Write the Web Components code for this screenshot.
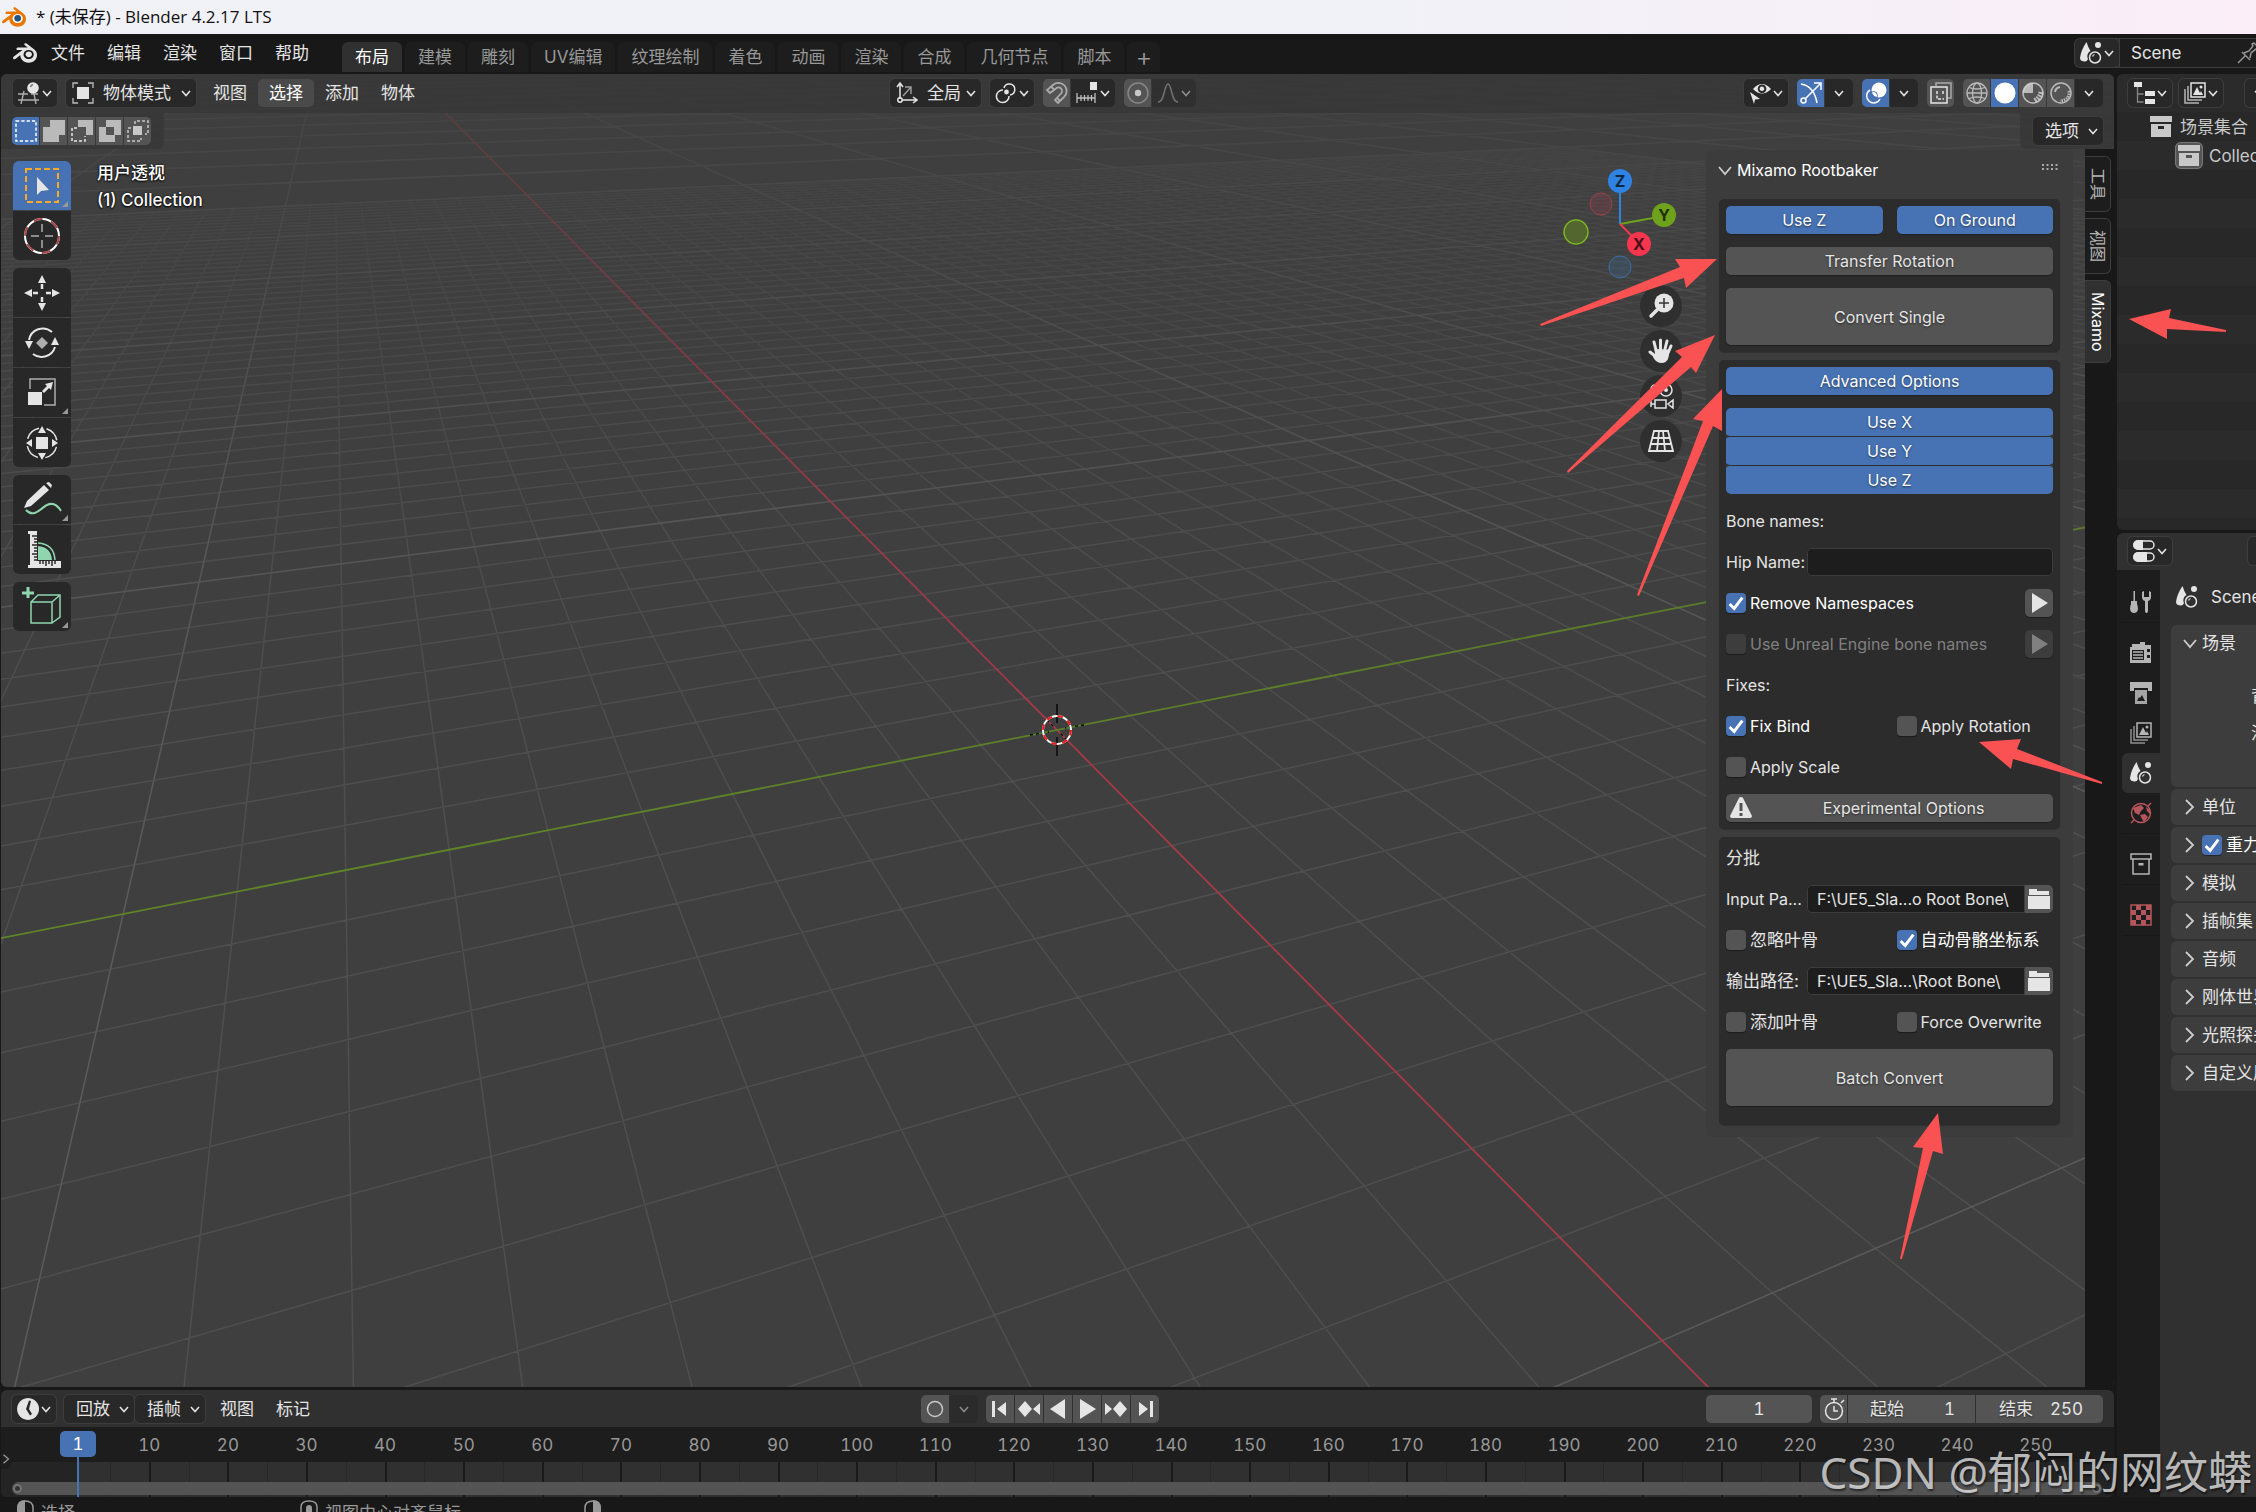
<!DOCTYPE html>
<html lang="zh-CN">
<head>
<meta charset="utf-8">
<title>* (未保存) - Blender 4.2.17 LTS</title>
<style>
  body {
    margin: 0;
    height: 100vh;
    overflow: hidden;
    background: #181818;
    color: #e5e5e5;
    font: 17px/28px Inter, "Noto Sans CJK SC", sans-serif;
  }
</style>
</head>
<body>
<bl-app></bl-app>

<script>
(function () {
  const BASE = `
    * { box-sizing: border-box; }
    :host(:lang(en)) { font-size: 16px; }
    button, input, select {
      font: inherit;
      color: inherit;
      margin: 0;
      padding: 0;
      border: 0;
      background: none;
      appearance: none;
    }
    button { display: flex; align-items: center; justify-content: center; white-space: nowrap; }
  `;

  function define(name, html, setup) {
    const template = document.createElement("template");
    template.innerHTML = `<style>${BASE}</style>${html}`;

    customElements.define(name, class extends HTMLElement {
      constructor() {
        super();
        this.attachShadow({ mode: "open" });
        this.shadowRoot.append(template.content.cloneNode(true));
      }

      connectedCallback() {
        if (setup) {
          setup(this, this.shadowRoot);
        }
      }
    });
  }

  const LOGO = "M12.51 13.214c.046-.8.438-1.506 1.03-2.006a3.424 3.424 0 0 1 2.212-.79c.85 0 1.631.3 2.211.79.592.5.983 1.206 1.028 2.005.045.823-.285 1.586-.865 2.153a3.389 3.389 0 0 1-2.374.938 3.393 3.393 0 0 1-2.376-.938c-.58-.567-.91-1.33-.865-2.152M7.35 14.831c.006.314.106.922.256 1.398a7.372 7.372 0 0 0 1.593 2.757 8.227 8.227 0 0 0 2.787 2.001 8.947 8.947 0 0 0 3.66.76 8.964 8.964 0 0 0 3.657-.772 8.285 8.285 0 0 0 2.785-2.01 7.428 7.428 0 0 0 1.592-2.762 6.964 6.964 0 0 0 .25-3.074 7.123 7.123 0 0 0-1.016-2.779 7.764 7.764 0 0 0-1.852-2.043h.002L13.566 2.55l-.02-.015c-.492-.378-1.319-.376-1.86.002-.547.382-.609 1.015-.123 1.415l-.001.001 3.126 2.543-9.53.01h-.013c-.788.001-1.545.518-1.695 1.172-.154.665.38 1.217 1.2 1.22V8.9l4.83-.01-8.62 6.617-.034.025c-.813.622-1.075 1.658-.563 2.315.52.667 1.625.668 2.447.004L7.414 14s-.069.52-.063.831zm12.09 1.741c-.97.988-2.326 1.548-3.795 1.55-1.47.004-2.827-.552-3.797-1.538a4.51 4.51 0 0 1-1.036-1.622 4.282 4.282 0 0 1 .282-3.519 4.702 4.702 0 0 1 1.153-1.371c.942-.768 2.141-1.183 3.396-1.185 1.256-.002 2.455.41 3.398 1.175.48.391.87.854 1.152 1.367a4.28 4.28 0 0 1 .522 1.706 4.236 4.236 0 0 1-.239 1.811 4.54 4.54 0 0 1-1.035 1.626";

  // Default grid is 22 units; fill is off, strokes are 1.5 unless a shape says otherwise.
  const F = 'fill="currentColor" stroke="none"';
  const G = 'fill="none" stroke="#8fd6ae"';
  const ICONS = {
    logo: { box: 24, svg: `<path ${F} d="${LOGO}"/>` },
    logocolor: { box: 24, svg: `<circle cx="15.7" cy="13.3" r="6" fill="#fff" stroke="none"/><path fill="#ea7600" stroke="none" d="${LOGO}"/><circle cx="15.7" cy="13.3" r="3.3" fill="#1f5387" stroke="none"/>` },
    chevron: { box: 12, svg: `<path d="M2 4l4 4.500l4-4.500"/>` },
    unfolded: { box: 20, svg: `<path stroke-width="1.800" opacity=".85" d="M4 7l6 7l6-7"/>` },
    folded: { box: 20, svg: `<path stroke-width="1.800" opacity=".85" d="M6 3l7 7l-7 7"/>` },
    right: { box: 12, svg: `<path d="M3 1l6 5l-6 5"/>` },
    view3d: { svg: `<g opacity=".7"><path d="M0 12h10M0 18h21M6 9L3 22M16 12l2 10M13 12h7" stroke-width="1.400"/></g><circle cx="15" cy="6" r="5.800" ${F}/><path d="M12.500 5q.5-2 2.500-2.500" stroke="#777"/>` },
    object: { svg: `<path d="M1 6V1h5M16 1h5v5M21 16v5h-5M6 21H1v-5" stroke-width="1.300" opacity=".8"/><rect x="5" y="5" width="12" height="12" ${F}/>` },
    axes: { svg: `<path d="M4 17V2M1 5l3-4l3 4M6 18h14M17 15l4 3l-4 3"/><circle cx="4" cy="18" r="2.200"/><g opacity=".6"><path d="M7 14l8-9M9 5h6v7"/></g>` },
    pivot: { svg: `<path d="M8 8a6.300 6.300 0 1 0 6 6"/><path d="M9 6a5.500 5.500 0 1 1 6 7"/><circle cx="11.500" cy="10" r="2.400" ${F}/>` },
    magnet: { svg: `<path stroke-width="1.800" d="M4 11L1 8L7 3a8 8 0 0 1 11 12L12 21L9 18l6-6.500a3.500 3.500 0 0 0-5-5zM5 4.500l3 3M11 16l3 3" opacity=".6"/>` },
    snapinc: { svg: `<path d="M1 11v10M19 11v10M1 16h18M5 13v6M8.500 13v6M12 13v6M15.500 13v6" stroke-width="1.300" opacity=".8"/><rect x="14" y="0" width="7" height="8" ${F}/>` },
    prop: { svg: `<circle cx="11" cy="11" r="10" opacity=".35"/><circle cx="11" cy="11" r="3.200" ${F} opacity=".8"/>` },
    falloff: { svg: `<path d="M1 20C8 20 7 2 11 2s3 18 10 18" opacity=".7"/>` },
    eye: { svg: `<path fill-rule="evenodd" ${F} d="M4 7Q13-3 22 7Q13 16 4 7zM13 2.500a4.300 4.300 0 1 0 .1 0zM13 4.500a2.300 2.300 0 1 1-.1 0z"/><path ${F} d="M1 10l10 7l-5 .5L5 22z"/>` },
    gizmo: { svg: `<path d="M1 2Q14 4 17 21M5 17L20 2M14 1h7v7"/><circle cx="3.500" cy="18.500" r="2.500"/>` },
    overlay: { svg: `<circle cx="14" cy="8" r="7.500" ${F}/><path d="M5 8a7 7 0 1 0 10 9"/><circle cx="8.500" cy="13.500" r="4" stroke="#4772b3" stroke-width="1"/>` },
    xray: { svg: `<path d="M6 4V1h15v15h-3" opacity=".6"/><rect x="1" y="5" width="16" height="16"/><path d="M7 9v8h7M13 9v4" stroke-dasharray="3 1.500"/>` },
    wire: { svg: `<g opacity=".7" stroke-width="1.300"><circle cx="11" cy="11" r="10"/><ellipse cx="11" cy="11" rx="4.500" ry="10"/><path d="M1 11h20M3 5.500q8 3 16 0M3 16.500q8-3 16 0"/></g>` },
    solid: { svg: `<circle cx="11" cy="11" r="10.500" ${F}/>` },
    matprev: { svg: `<circle cx="11" cy="11" r="10" opacity=".7"/><path ${F} opacity=".7" d="M11 1v10H1A10 10 0 0 1 11 1z"/><path opacity=".7" stroke-width="5" stroke-dasharray="2 1" d="M19 10Q18 16 12 19"/>` },
    rendered: { svg: `<g opacity=".7"><circle cx="11" cy="11" r="10"/><path d="M5 10a6 6 0 0 1 5-5" stroke-width="2"/><path d="M19 9Q20 18 10 19" stroke-width="3" stroke-dasharray="1.500 1"/></g>` },
    scene: { svg: `<path ${F} d="M6.500 0Q8 5 10.500 9A6.500 6.500 0 0 0 8 17Q7 20 4 19.500Q0 19 0 16Q1 8 6.500 0z"/><circle cx="18" cy="3" r="3" ${F}/><circle cx="15" cy="15.500" r="5.500"/><path d="M12.500 14.500q.5-1.500 2-2" stroke-width="1.200"/>` },
    pin: { svg: `<path d="M1 21l7-7M5 10l8 8M7 11l5-2l4-5l-1-2l2-1l5 5l-1 2l-2-1l-5 4l-1 5" opacity=".6"/>` },
    outliner: { svg: `<rect x="1" y="0" width="8" height="5" ${F}/><rect x="12" y="9" width="10" height="5" ${F}/><rect x="12" y="17" width="10" height="5" ${F}/><path d="M4.500 5v15h6M4.500 12h6" opacity=".5" stroke-width="1.300"/>` },
    viewlayer: { svg: `<g opacity=".75"><path d="M1 7v14h14M4 4v14h14"/></g><rect x="7" y="1" width="14" height="14"/><path ${F} d="M9 13l4-8l4 8zM15 13l2-4l2 4z"/><circle cx="17" cy="5" r="1.500" ${F}/>` },
    collection: { svg: `<path fill-rule="evenodd" ${F} d="M0 0h22v6H0zM1 8h20v13H1zM8 10v3h6v-3z"/>` },
    collectionline: { svg: `<path d="M1 1h20v5H1zM3 6v15h16V6"/><rect x="8.500" y="10" width="5" height="2.500" ${F}/>` },
    props: { svg: `<rect x="1" y="1" width="20" height="8" rx="4"/><rect x="1" y="13" width="20" height="8" rx="4"/><path ${F} d="M5 0h5v10H5a5 5 0 0 1 0-10zM5 12h9v10H5a5 5 0 0 1 0-10z"/>` },
    tools: { svg: `<path ${F} d="M3.500 0h1.500v11H3.500zM1 10h6v3q1 2 1 5q-.5 4-4 4t-4-4q0-3 1-5zM12 1v5q0 3 3 4v10q0 2 1.500 2t1.500-2V10q3-1 3-4V1l-2-1v6h-5V0z"/>` },
    render: { svg: `<path fill-rule="evenodd" ${F} d="M2 2h8V0h5v3h6v18H0V5h2zM2 8v10h12V8zM17 7v3h3V7zM17 13v3h3v-3z"/><path d="M3 10h10M3 13h10M3 16h10"/>` },
    output: { svg: `<path ${F} d="M0 0h22v9h-4V6H4v3H0z"/><path fill-rule="evenodd" ${F} opacity=".9" d="M5 8h12v14H5zM7 19h8l-3-6-2 3-1-1z"/>` },
    world: { svg: `<circle cx="11" cy="11" r="9.500"/><path ${F} d="M3 6l8-3l3 3l-3 3l-2 4l-4-2zM10 13l5-1l3 3l-4 5l-2-3zM16 5l4 3v4l-3-3z"/><path d="M1 21l3-3M18 4l3-3"/>` },
    texture: { svg: `<rect x="1" y="1" width="20" height="20"/><path ${F} d="M6 1h5v5H6zM16 1h5v5h-5zM1 6h5v5H1zM11 6h5v5h-5zM6 11h5v5H6zM16 11h5v5h-5zM1 16h5v5H1zM11 16h5v5h-5z"/>` },
    clock: { svg: `<path fill-rule="evenodd" ${F} d="M11 0a11 11 0 1 0 .1 0zM14 3l-2 8l3 5l-2 1.500l-4-6.500l3-8.500z"/>` },
    stopwatch: { svg: `<circle cx="11" cy="13" r="8.500"/><path d="M8 1h6M11 1v4M18 5l3-3M11 8v5h4"/>` },
    record: { svg: `<circle cx="11" cy="11" r="7.500" opacity=".8"/>` },
    first: { svg: `<path ${F} d="M3 3h3v16H3zM17 4v14L8 11z"/>` },
    prevkey: { svg: `<path ${F} d="M7 3l7 8l-7 8l-7-8zM22 5v12l-7-6z"/>` },
    playback: { svg: `<path ${F} d="M18 1v20L3 11z"/>` },
    play: { svg: `<path ${F} d="M4 1v20L20 11z"/>` },
    nextkey: { svg: `<path ${F} d="M15 3l7 8l-7 8l-7-8zM0 5v12l7-6z"/>` },
    last: { svg: `<path ${F} d="M16 3h3v16h-3zM5 4v14L14 11z"/>` },
    folder: { svg: `<path ${F} d="M1 1h8v2h12v4H1zM0 8h22v13H0z"/>` },
    warn: { svg: `<path fill-rule="evenodd" ${F} d="M11 0q1.500 0 2 1l9 18q0 2-2 2H2q-2 0-2-2L9 1q.5-1 2-1zM9.500 6v8h3V6zM9.500 16v3h3v-3z"/>` },
    selset: { svg: `<rect x="1" y="1" width="20" height="20" stroke-dasharray="3.300 2" stroke-width="1.500"/>` },
    selext: { svg: `<path ${F} d="M7 0h15v15h-6v7H0V7h7z" opacity=".7"/>` },
    selsub: { svg: `<path ${F} d="M7 0h15v15h-7V7H7z" opacity=".7"/><path d="M6 8H1v13h13v-5" stroke-dasharray="3 2"/>` },
    seldif: { svg: `<path fill-rule="evenodd" ${F} opacity=".7" d="M7 0h15v15h-6v7H0V7h7zM7 7v8h8V7z"/>` },
    selint: { svg: `<rect x="6" y="6" width="9" height="9" ${F} opacity=".8"/><path d="M8 4V1h13v13h-3M4 8H1v13h13v-3" stroke-dasharray="3 2" opacity=".8"/>` },
    mouseL: { svg: `<path d="M11 1q8 0 8 7v14"/><path ${F} d="M11 0v22H3V8q0-8 8-8z"/>` },
    mouseM: { svg: `<path d="M3 22V7q0-6 8-6t8 6v15"/><rect x="8" y="5" width="6" height="17" rx="3" ${F}/>` },
    mouseR: { svg: `<path d="M3 22V8q0-7 8-7"/><path ${F} d="M11 0q8 0 8 8v14h-8z"/>` },
    tselect: { box: 40, svg: `<rect x="4" y="3" width="32" height="33" fill="none" stroke="#ffa928" stroke-width="2" stroke-dasharray="6 3"/><path ${F} d="M15 11v18l4-4l8-1z"/>` },
    tcursor: { box: 40, svg: `<circle cx="20" cy="20" r="17" stroke="#fff" stroke-width="2"/><circle cx="20" cy="20" r="17" stroke="#a84448" stroke-width="2" stroke-dasharray="9 8.800"/><path d="M20 8v8M20 24v8M9 20h8M23 20h8" opacity=".7"/>` },
    tmove: { box: 40, svg: `<path ${F} d="M20 2l4 8h-8zM20 38l4-8h-8zM2 20l8-4v8zM38 20l-8-4v8z"/><path d="M20 11v5M20 24v5M11 20h5M24 20h5" stroke-width="2.500"/>` },
    trotate: { box: 40, svg: `<path d="M7 17A14 14 0 0 1 30 9M33 24A14 14 0 0 1 11 31" stroke-width="2"/><path ${F} d="M3 18h8l-4 8zM29 22h8l-4-8z"/><path ${F} opacity=".7" d="M20 14l6 6l-6 6l-6-6z"/>` },
    tscale: { box: 40, svg: `<path d="M8 16V6h25v26H22" opacity=".7"/><path ${F} d="M6 19h14v13H6zM31 9l-2 8l-2-2l-5 5l-2-2l5-5l-2-2z"/>` },
    ttransform: { box: 40, svg: `<circle cx="20" cy="20" r="15" stroke-dasharray="16 7.600" stroke-dashoffset="-4"/><path ${F} d="M14 14h12v12H14zM20 3l4 7h-8zM20 37l4-7h-8zM4 20l6-4v8zM36 20l-6-4v8z"/>` },
    tannotate: { box: 40, svg: `<path ${F} d="M2 28l3-7L22 5l5 5L9 26zM24 3l3-1l3 3l-1 3z"/><path d="M4 30C12 39 20 27 25 25Q33 21 39 31" ${G} stroke-width="2"/>` },
    tmeasure: { box: 40, svg: `<path ${F} d="M6 1h9v30h24v7H6v-3h2V4H6z"/><path stroke="#282828" d="M10 6h5M12 9h3M12 12h3M10 15h5M12 18h3M12 21h3M10 24h5M12 27h3M12 30h3M18 31v3M21 31v3M24 31v5M27 31v3M30 31v5M33 31v3"/><path fill="#8fd6ae" stroke="none" d="M16 16q13 1 14 14H16z"/><path ${G} d="M16 13q16 1 17 17"/>` },
    taddcube: { box: 40, svg: `<path ${G} stroke-width="3" d="M6 0v11M0 6h12"/><path ${G} d="M9 15h21v21H9zM9 15l7-7h22v22l-8 6M30 15l8-7"/>` },
    zoom: { box: 26, svg: `<circle cx="16" cy="10" r="9.500" ${F}/><path d="M9 17l-6 6" stroke-width="3.500" stroke-linecap="round"/><path stroke="#333" d="M16 5v10M11 10h10"/>` },
    hand: { box: 26, svg: `<path d="M8 12L6 4M12.500 11V2M17 11l2-8M20 15l3-7M7 18l-5-4" stroke-width="3" stroke-linecap="round"/><path ${F} d="M6.500 11L21 11.500q1 13-7 13.500q-6 0-9-6l2-3z"/>` },
    camera: { box: 26, svg: `<circle cx="7" cy="6" r="4"/><circle cx="18" cy="7" r="6"/><circle cx="18" cy="7" r="2" ${F}/><path d="M7 17h11v8H7zM7 21H3M3 18v6M25 17v8l-5-4z"/>` },
    persp: { box: 26, svg: `<path stroke-width="1.800" d="M6 3h14l5 20H1zM4 10h18M3 16h20M11 3L9 23M15 3l2 20"/>` },
    grip: { box: 16, svg: `<path stroke="#aaa" stroke-width="2" stroke-dasharray="2 2.500" d="M0 5h16M0 9h16"/>` },
    check: { svg: `<path stroke="#fff" stroke-width="3.200" d="M4 12l5 5L18 5"/>` }
  };

  define("bl-icon", `
    <style>
      :host { display: block; flex: none; width: 22px; height: 22px; }
      :host([size="12"]) { width: 12px; height: 12px; }
      :host([size="16"]) { width: 16px; height: 16px; }
      :host([size="20"]) { width: 20px; height: 20px; }
      :host([size="24"]) { width: 24px; height: 24px; }
      :host([size="26"]) { width: 26px; height: 26px; }
      :host([size="40"]) { width: 40px; height: 40px; }
      svg { display: block; width: 100%; height: 100%; fill: none; stroke: currentColor; stroke-width: 1.5; }
    </style>
    <svg aria-hidden="true"></svg>
  `, (host, root) => {
    const icon = ICONS[host.getAttribute("name")];
    if (!icon) {
      return;
    }
    const svg = root.querySelector("svg");
    svg.setAttribute("viewBox", `0 0 ${icon.box || 22} ${icon.box || 22}`);
    svg.innerHTML = icon.svg;
  });

  function makeIcon(name, size) {
    const icon = document.createElement("bl-icon");
    icon.setAttribute("name", name);
    if (size) {
      icon.setAttribute("size", size);
    }
    return icon;
  }

  define("bl-button", `
    <style>
      :host { display: block; flex: 1; min-width: 0; }
      button {
        width: 100%;
        height: 28px;
        gap: 6px;
        padding: 0 4px;
        border-radius: 5px;
        background: #545454;
        text-shadow: 0 1px 2px #0008;
        box-shadow: 0 1px 1px #0004;
      }
      :host([on]) button { background: #4772b3; color: #fff; }
      :host([tall]) button { height: 57px; }
      :host([square]) { flex: none; width: 28px; }
      :host([disabled]) button { background: #3d3d3d; color: #808080; }
    </style>
    <button type="button"><slot></slot></button>
  `);

  // Icon or text with a drop-down arrow
  define("bl-drop", `
    <style>
      :host { display: block; flex: none; }
      button {
        height: 28px;
        gap: 1px;
        padding: 0 4px 0 5px;
        border-radius: 5px;
        background: #282828;
        box-shadow: 0 0 0 1px #3d3d3d;
      }
      :host([wide]) button { gap: 8px; padding: 0 4px 0 12px; }
      :host([arrow]) button { width: 28px; padding: 0; }
      :host([dim]) button { opacity: .5; }
      :host([flat]) button { border-radius: 0 5px 5px 0; box-shadow: none; }
    </style>
    <button type="button"><slot></slot><bl-icon name="chevron" size="12"></bl-icon></button>
  `);

  define("bl-select", `
    <style>
      :host { display: block; flex: none; }
      label {
        display: flex;
        align-items: center;
        height: 28px;
        gap: 9px;
        padding: 0 4px 0 6px;
        border-radius: 5px;
        background: #282828;
        box-shadow: 0 0 0 1px #3d3d3d;
      }
      :host([tight]) select { margin-right: -5px; }
      select { line-height: 28px; }
    </style>
    <label>
      <slot name="icon"></slot>
      <select><option></option></select>
      <bl-icon name="chevron" size="12"></bl-icon>
    </label>
  `, (host, root) => {
    root.querySelector("option").textContent = host.getAttribute("value");
    root.querySelector("select").setAttribute("aria-label", host.getAttribute("label"));
  });

  define("bl-toggle", `
    <style>
      :host { display: block; flex: none; }
      button { width: var(--toggle-width, 27px); height: 28px; background: #545454; color: #e5e5e5; }
      :host([on]) button { background: #4772b3; color: #fff; }
      :host(:first-child) button { border-radius: 5px 0 0 5px; }
      :host(:last-child) button { border-radius: 0 5px 5px 0; }
      :host(:only-child) button { border-radius: 5px; }
    </style>
    <button type="button"></button>
  `, (host, root) => {
    const button = root.querySelector("button");
    button.setAttribute("aria-label", host.getAttribute("icon"));
    button.replaceChildren(makeIcon(host.getAttribute("icon")));
  });

  define("bl-check", `
    <style>
      :host { display: block; flex: 1; min-width: 0; }
      label { display: flex; align-items: center; gap: 4px; height: 28px; white-space: nowrap; }
      span { display: grid; flex: none; }
      input, bl-icon { grid-area: 1 / 1; }
      input { width: 20px; height: 20px; border-radius: 4px; background: #545454; box-shadow: 0 1px 1px #0006; }
      input:checked { background: #4772b3; }
      bl-icon { display: none; width: 20px; height: 20px; pointer-events: none; }
      input:checked + bl-icon { display: block; }
      :host([checked]) label { color: #fff; }
      :host([disabled]) label { color: #808080; }
      :host([disabled]) input { background: #3d3d3d; }
    </style>
    <label><span><input type="checkbox"><bl-icon name="check"></bl-icon></span><slot></slot></label>
  `, (host, root) => {
    const input = root.querySelector("input");
    input.checked = host.hasAttribute("checked");
    input.disabled = host.hasAttribute("disabled");
  });

  define("bl-field", `
    <style>
      :host { display: block; }
      label { display: grid; grid-template-columns: 81px 1fr auto; height: 28px; white-space: nowrap; }
      input { min-width: 0; width: 100%; height: 28px; padding: 0 4px 0 10px; border-radius: 5px; background: #1d1d1d; box-shadow: inset 0 0 0 1px #3d3d3d; font-size: 16px; }
      :host([path]) input { border-radius: 5px 0 0 5px; }
      button { display: none; width: 28px; height: 28px; background: #545454; border-radius: 0 5px 5px 0; }
      :host([path]) button { display: flex; }
    </style>
    <label><span><slot></slot></span><input type="text"><button type="button" aria-label="浏览"><bl-icon name="folder"></bl-icon></button></label>
  `, (host, root) => {
    root.querySelector("input").value = host.getAttribute("value") || "";
  });

  define("bl-titlebar", `
    <style>
      :host {
        display: flex;
        align-items: center;
        gap: 10px;
        height: 34px;
        padding-left: 2px;
        background: linear-gradient(90deg, #f1f2f8 60%, #fbeef8);
        color: #111;
        font: 17px/34px "Open Sans", "Noto Sans CJK SC", sans-serif;
      }
    </style>
    <bl-icon name="logocolor" size="24"></bl-icon><slot></slot>
  `);

  define("bl-topbar", `
    <style>
      :host { display: flex; height: 40px; padding-left: 13px; }
      nav { display: flex; }
      .menus { align-items: center; padding-bottom: 2px; }
      .menus button { padding: 0 11px; height: 28px; }
      .menus bl-icon { margin-right: 3px; }
      .tabs { gap: 3px; margin-left: 22px; padding-top: 8px; }
      .tabs button { height: 30px; padding: 0 13px; border-radius: 6px 6px 0 0; background: #1d1d1d; color: #989898; }
      .tabs button.on { background: #303030; color: #fff; }
      .tabs button.add { padding: 0 8px; font-size: 26px; font-weight: 300; }
      .scene { display: flex; align-items: center; margin-left: auto; width: 182px; height: 30px; margin-top: 4px; overflow: hidden; border: 1px solid #3d3d3d; border-right: 0; border-radius: 6px 0 0 6px; background: #1d1d1d; }
      .scene input { flex: 1; min-width: 0; padding-left: 11px; height: 28px; border-left: 1px solid #3d3d3d; }
      .scene bl-icon { margin-right: -3px; }
      .scene bl-drop bl-icon { margin-right: 0; }
    </style>
    <nav class="menus">
      <bl-icon name="logo" size="24"></bl-icon>
      <button>文件</button><button>编辑</button><button>渲染</button><button>窗口</button><button>帮助</button>
    </nav>
    <nav class="tabs">
      <button class="on">布局</button><button>建模</button><button>雕刻</button><button>UV编辑</button>
      <button>纹理绘制</button><button>着色</button><button>动画</button><button>渲染</button>
      <button>合成</button><button>几何节点</button><button>脚本</button><button class="add" aria-label="添加工作区">+</button>
    </nav>
    <div class="scene">
      <bl-drop><bl-icon name="scene"></bl-icon></bl-drop>
      <input type="text" value="Scene" aria-label="场景">
      <bl-icon name="pin"></bl-icon>
    </div>
  `);

  // Ground plane seen through a 50mm lens, drawn around the view centre.
  const LENS = 1467;
  const DIST = 17.986;
  const AZIMUTH = 1.1547;
  const SIN_E = 0.4459;
  const COS_E = 0.8951;

  function project(x, y) {
    const side = x * Math.cos(AZIMUTH) + y * Math.sin(AZIMUTH);
    const away = y * Math.cos(AZIMUTH) - x * Math.sin(AZIMUTH);
    const depth = DIST + COS_E * away;
    return { x: LENS * side / depth, y: -LENS * SIN_E * away / depth, depth };
  }

  function groundLine(k, reach, alongX) {
    const at = (t) => (alongX ? project(t, k) : project(k, t));
    const d0 = at(0).depth;
    const slope = at(1).depth - d0;
    const near = (2 - d0) / slope;
    const from = slope > 0 ? Math.max(-reach, near) : -reach;
    const to = slope > 0 ? reach : Math.min(reach, near);
    if (from >= to) {
      return "";
    }
    const a = at(from);
    const b = at(to);
    return `M${a.x.toFixed(1)} ${a.y.toFixed(1)}L${b.x.toFixed(1)} ${b.y.toFixed(1)}`;
  }

  define("bl-grid", `
    <style>
      :host { display: block; overflow: hidden; }
      svg { display: block; width: 100%; height: 100%; fill: none; }
    </style>
    <svg viewBox="-1056 -656 2113 1313" preserveAspectRatio="xMidYMid slice" aria-hidden="true">
      <defs>
        <linearGradient id="fade" x1="0" y1="-656" x2="0" y2="656" gradientUnits="userSpaceOnUse">
          <stop offset="0" stop-color="#fff" stop-opacity=".15"/>
          <stop offset=".12" stop-color="#fff" stop-opacity=".4"/>
          <stop offset=".35" stop-color="#fff" stop-opacity=".85"/>
          <stop offset=".6" stop-color="#fff"/>
        </linearGradient>
        <mask id="far" maskUnits="userSpaceOnUse" x="-1056" y="-656" width="2113" height="1313">
          <rect x="-1056" y="-656" width="2113" height="1313" fill="url(#fade)"/>
        </mask>
      </defs>
      <g mask="url(#far)">
        <path class="minor" stroke="#4f4f4f" stroke-width="1.500"/>
        <path class="major" stroke="#5a5a5a" stroke-width="1.600"/>
        <path class="x" stroke="#a83a48" stroke-width="1.800"/>
        <path class="y" stroke="#5f8528" stroke-width="1.800"/>
      </g>
      <path stroke="#000" stroke-width="1.300" d="M0-26v19M0 26v-19"/>
      <path stroke="#000" stroke-width="1.300" stroke-dasharray="3 3" d="M-27 5L-8 2M27-5L8-2M-10-10L-3-3M10 10L3 3"/>
      <circle r="14" stroke="#fff" stroke-width="2"/>
      <circle r="14" stroke="#f01818" stroke-width="2" stroke-dasharray="5.500 5.500"/>
    </svg>
  `, (host, root) => {
    let minor = "";
    let major = "";
    for (let k = -60; k <= 60; k++) {
      if (k % 10) {
        minor += groundLine(k, 60, true) + groundLine(k, 60, false);
      }
    }
    for (let k = -200; k <= 200; k += 10) {
      if (k) {
        major += groundLine(k, 300, true) + groundLine(k, 300, false);
      }
    }
    root.querySelector(".minor").setAttribute("d", minor);
    root.querySelector(".major").setAttribute("d", major);
    root.querySelector(".x").setAttribute("d", groundLine(0, 400, true));
    root.querySelector(".y").setAttribute("d", groundLine(0, 400, false));
  });

  define("bl-header", `
    <style>
      :host { display: grid; grid-template-columns: 1fr auto 1fr; align-items: center; height: 39px; padding: 5px 11px 6px 12px; background: #383838e8; }
      div { display: flex; align-items: center; gap: 9px; }
      .pair { gap: 1px; }
      .tools { margin-right: 30px; }
      .right { justify-content: flex-end; }
      .menus { gap: 0; margin-left: -3px; }
      .menus button { height: 28px; padding: 0 11px; border-radius: 5px; }
      .menus button.on { background: #4a4a4a; color: #fff; }
    </style>
    <div>
      <bl-drop><bl-icon name="view3d"></bl-icon></bl-drop>
      <bl-select value="物体模式" label="模式"><bl-icon slot="icon" name="object"></bl-icon></bl-select>
      <div class="menus"><button>视图</button><button class="on">选择</button><button>添加</button><button>物体</button></div>
    </div>
    <div class="tools">
      <bl-select tight value="全局" label="坐标系"><bl-icon slot="icon" name="axes"></bl-icon></bl-select>
      <bl-drop><bl-icon name="pivot"></bl-icon></bl-drop>
      <div class="pair"><bl-toggle icon="magnet"></bl-toggle><bl-drop flat><bl-icon name="snapinc"></bl-icon></bl-drop></div>
      <div class="pair"><bl-toggle icon="prop"></bl-toggle><bl-drop flat dim><bl-icon name="falloff"></bl-icon></bl-drop></div>
    </div>
    <div class="right">
      <bl-drop><bl-icon name="eye"></bl-icon></bl-drop>
      <div class="pair"><bl-toggle on icon="gizmo"></bl-toggle><bl-drop arrow flat></bl-drop></div>
      <div class="pair"><bl-toggle on icon="overlay"></bl-toggle><bl-drop arrow flat></bl-drop></div>
      <div class="pair"><bl-toggle icon="xray"></bl-toggle></div>
      <div class="pair">
        <bl-toggle icon="wire"></bl-toggle><bl-toggle on icon="solid"></bl-toggle><bl-toggle icon="matprev"></bl-toggle><bl-toggle icon="rendered"></bl-toggle><bl-drop arrow flat></bl-drop>
      </div>
    </div>
  `);

  define("bl-toolbar", `
    <style>
      :host { display: flex; flex-direction: column; gap: 8px; width: 58px; }
      div { display: grid; gap: 1px; border-radius: 6px; overflow: hidden; }
      button { position: relative; height: 49px; background: #282828; }
      button.on { background: #4772b3; }
      .more::after { content: ""; position: absolute; right: 3px; bottom: 3px; border: 3px solid transparent; border-right-color: #999; border-bottom-color: #999; }
    </style>
    <div>
      <button class="on more" aria-label="框选"><bl-icon name="tselect" size="40"></bl-icon></button>
      <button aria-label="游标"><bl-icon name="tcursor" size="40"></bl-icon></button>
    </div>
    <div>
      <button aria-label="移动"><bl-icon name="tmove" size="40"></bl-icon></button>
      <button aria-label="旋转"><bl-icon name="trotate" size="40"></bl-icon></button>
      <button class="more" aria-label="缩放"><bl-icon name="tscale" size="40"></bl-icon></button>
      <button aria-label="变换"><bl-icon name="ttransform" size="40"></bl-icon></button>
    </div>
    <div>
      <button class="more" aria-label="标注"><bl-icon name="tannotate" size="40"></bl-icon></button>
      <button aria-label="测量"><bl-icon name="tmeasure" size="40"></bl-icon></button>
    </div>
    <div>
      <button class="more" aria-label="添加立方体"><bl-icon name="taddcube" size="40"></bl-icon></button>
    </div>
  `);

  define("bl-navigate", `
    <style>
      :host { display: flex; flex-direction: column; align-items: flex-end; gap: 3px; padding: 15px 24px 0 0; }
      svg { width: 120px; height: 118px; margin-right: 2px; font: bold 16px Inter, sans-serif; text-anchor: middle; }
      button { width: 42px; height: 42px; border-radius: 50%; background: #2f2f2f; }
    </style>
    <svg viewBox="-60 -60 120 118">
      <circle cx="-19" cy="-20" r="11" fill="#a03c4a40" stroke="#a03c4a"/>
      <circle cx="0" cy="43" r="11" fill="#3a6ea840" stroke="#3a6ea8"/>
      <circle cx="-44" cy="8" r="12" fill="#536630" stroke="#7ab51d" stroke-width="1.500"/>
      <path d="M0 0V-32" stroke="#2f83e3" stroke-width="2"/>
      <path d="M0 0L33-6" stroke="#6fa21c" stroke-width="2"/>
      <path d="M0 0L12 12" stroke="#f6354f" stroke-width="2"/>
      <circle cx="0" cy="-43" r="12" fill="#2f83e3"/>
      <circle cx="44" cy="-9" r="12" fill="#6fa21c"/>
      <circle cx="19" cy="20" r="12" fill="#f6354f"/>
      <text x="0" y="-37" fill="#0e2844">Z</text>
      <text x="44" y="-3" fill="#213008">Y</text>
      <text x="19" y="26" fill="#4a1018">X</text>
    </svg>
    <button aria-label="缩放"><bl-icon name="zoom" size="26"></bl-icon></button>
    <button aria-label="平移"><bl-icon name="hand" size="26"></bl-icon></button>
    <button aria-label="摄像机"><bl-icon name="camera" size="26"></bl-icon></button>
    <button aria-label="透视"><bl-icon name="persp" size="26"></bl-icon></button>
  `);

  define("bl-box", `
    <style>
      :host { display: flex; flex-direction: column; gap: 13px; padding: 7px; border-radius: 5px; background: #2c2c2c; box-shadow: 0 1px 1px #0003; }
    </style>
    <slot></slot>
  `);

  define("bl-rootbaker", `
    <style>
      :host { display: flex; flex-direction: column; align-self: flex-start; gap: 8px; width: 367px; margin: 1px 12px 0 0; padding: 5px 13px 12px; border-radius: 6px; background: #3c3c3c; }
      header { display: flex; align-items: center; gap: 2px; height: 36px; margin-left: -4px; padding: 0 8px 6px 0; }
      header bl-icon[name="grip"] { margin: 0 -6px 4px auto; }
      .row { display: flex; gap: 14px; }
      .stack { display: grid; gap: 1px; border-radius: 5px; overflow: hidden; background: #3d3d3d; }
      .stack bl-button { margin: 0 -1px; }
      p { margin: 0; height: 28px; }
      .last { padding-bottom: 19px; }
      .label { flex: 1; text-align: center; }
      h2 { margin: 0; font: inherit; color: #fff; }
      [lang="en"] { font-size: 16px; }
    </style>
    <header><bl-icon name="unfolded" size="20"></bl-icon><h2 lang="en">Mixamo Rootbaker</h2><bl-icon name="grip" size="16"></bl-icon></header>
    <bl-box lang="en">
      <div class="row"><bl-button on>Use Z</bl-button><bl-button on>On Ground</bl-button></div>
      <bl-button>Transfer Rotation</bl-button>
      <bl-button tall>Convert Single</bl-button>
    </bl-box>
    <bl-box lang="en">
      <bl-button on>Advanced Options</bl-button>
      <div class="stack"><bl-button on>Use X</bl-button><bl-button on>Use Y</bl-button><bl-button on>Use Z</bl-button></div>
      <p>Bone names:</p>
      <bl-field>Hip Name:</bl-field>
      <div class="row"><bl-check checked>Remove Namespaces</bl-check><bl-button square><bl-icon name="play"></bl-icon></bl-button></div>
      <div class="row"><bl-check disabled>Use Unreal Engine bone names</bl-check><bl-button square disabled><bl-icon name="play"></bl-icon></bl-button></div>
      <p>Fixes:</p>
      <div class="row"><bl-check checked>Fix Bind</bl-check><bl-check>Apply Rotation</bl-check></div>
      <bl-check>Apply Scale</bl-check>
      <bl-button><bl-icon name="warn"></bl-icon><span class="label">Experimental Options</span></bl-button>
    </bl-box>
    <bl-box class="last">
      <p>分批</p>
      <bl-field lang="en" path value="F:\\UE5_Sla...o Root Bone\\">Input Pa...</bl-field>
      <div class="row"><bl-check>忽略叶骨</bl-check><bl-check checked>自动骨骼坐标系</bl-check></div>
      <bl-field path value="F:\\UE5_Sla...\\Root Bone\\">输出路径:</bl-field>
      <div class="row"><bl-check>添加叶骨</bl-check><bl-check lang="en">Force Overwrite</bl-check></div>
      <bl-button lang="en" tall>Batch Convert</bl-button>
    </bl-box>
  `);

  define("bl-sidetabs", `
    <style>
      :host { display: flex; flex-direction: column; gap: 6px; width: 29px; padding: 7px 3px 0 0; background: #181818; }
      button { width: 26px; height: 56px; border: 1px solid #3d3d3d; border-left: 0; border-radius: 0 6px 6px 0; background: #1d1d1d; color: #b5b5b5; writing-mode: vertical-rl; text-orientation: sideways; font-size: 16px; line-height: 24px; }
      button.on { height: 83px; background: #303030; color: #fff; }
    </style>
    <button>工具</button><button>视图</button><button class="on">Mixamo</button>
  `);

  define("bl-viewport", `
    <style>
      :host { display: flex; flex-direction: column; position: relative; flex: 1; min-height: 0; border-radius: 6px; overflow: hidden; background: #3f3f3f; }
      bl-grid { position: absolute; inset: 0; }
      bl-header, .settings, .body { position: relative; }
      .settings { display: flex; justify-content: space-between; height: 36px; }
      .modes { display: flex; gap: 1px; padding: 4px 13px 0 11px; background: #383838e8; border-radius: 0 0 6px 0; }
      .options { padding: 4px 11px 0 13px; background: #383838e8; border-radius: 0 0 0 6px; }
      .body { display: flex; flex: 1; min-height: 0; }
      bl-toolbar { margin: 12px 26px 0 12px; }
      .info { flex: 1; padding-top: 11px; line-height: 27px; font-weight: 500; color: #fff; text-shadow: 0 0 2px #000, 0 1px 2px #000; }
    </style>
    <bl-grid></bl-grid>
    <bl-header></bl-header>
    <div class="settings">
      <div class="modes">
        <bl-toggle on icon="selset"></bl-toggle><bl-toggle icon="selext"></bl-toggle><bl-toggle icon="selsub"></bl-toggle><bl-toggle icon="seldif"></bl-toggle><bl-toggle icon="selint"></bl-toggle>
      </div>
      <div class="options"><bl-drop wide>选项</bl-drop></div>
    </div>
    <div class="body">
      <bl-toolbar></bl-toolbar>
      <div class="info">用户透视<br>(1) Collection</div>
      <bl-navigate></bl-navigate>
      <bl-rootbaker></bl-rootbaker>
      <bl-sidetabs></bl-sidetabs>
    </div>
  `);

  define("bl-timeline", `
    <style>
      :host { display: block; position: relative; border-radius: 6px; overflow: hidden; background: #303030; font-variant-numeric: tabular-nums; }
      header { display: grid; grid-template-columns: 1fr auto 1fr; align-items: center; height: 37px; padding: 0 11px; }
      header div { display: flex; align-items: center; gap: 8px; }
      header .join { gap: 1px; }
      .menus { margin-left: 3px; }
      .menus button { padding: 0 10px 0 4px; }
      .player { margin-right: 36px; --toggle-width: 28px; }
      .right { justify-content: flex-end; }
      .num { display: flex; align-items: center; height: 28px; background: #545454; text-shadow: 0 1px 2px #0008; }
      .num input { width: 40px; text-align: right; }
      .now input { width: 106px; height: 28px; text-align: center; border-radius: 5px; background: #545454; }
      .from { width: 127px; padding: 0 20px 0 22px; justify-content: space-between; }
      .to { width: 127px; padding: 0 20px 0 23px; justify-content: space-between; border-radius: 0 5px 5px 0; }
      .scrub, .track { display: grid; grid-template-columns: repeat(25, 1fr); padding: 0 39px 0 109px; }
      .scrub { height: 35px; line-height: 37px; background: #1d1d1d; color: #989898; text-align: center; }
      .track { height: 35px; background: linear-gradient(90deg, #242424 77px, transparent 77px calc(100% - 78px), #242424 calc(100% - 78px)); }
      .track i { border-left: 1px solid #282828; background: linear-gradient(#1a1a1a, #1a1a1a) 50% 0 / 2px 100% no-repeat; }
      .bar { position: absolute; left: 11px; right: 12px; bottom: 2px; height: 13px; border-radius: 7px; background: #545454; }
      .bar::before, .bar::after { content: ""; position: absolute; top: 2px; left: 1px; width: 9px; height: 9px; border-radius: 50%; box-shadow: inset 0 0 0 2px #777; background: #333; }
      .bar::after { left: auto; right: 1px; }
      .head { position: absolute; left: 59px; top: 41px; bottom: 0; width: 36px; text-align: center; color: #fff; line-height: 26px; background: linear-gradient(#4772b3, #4772b3) 50% 0 / 2px 100% no-repeat; }
      .head b { display: block; font-weight: 400; border-radius: 5px; background: #4772b3; }
      .grab { position: absolute; left: 0; top: 59px; width: 10px; height: 20px; color: #999; background: #1d1d1d; border-radius: 0 4px 4px 0; }
    </style>
    <header>
      <div>
        <bl-drop><bl-icon name="clock"></bl-icon></bl-drop>
        <div class="join"><bl-drop wide>回放</bl-drop><bl-drop wide>插帧</bl-drop></div>
        <div class="menus"><button>视图</button><button>标记</button></div>
      </div>
      <div class="player">
        <div class="join"><bl-toggle icon="record"></bl-toggle><bl-drop arrow flat dim></bl-drop></div>
        <div class="join">
          <bl-toggle icon="first"></bl-toggle><bl-toggle icon="prevkey"></bl-toggle><bl-toggle icon="playback"></bl-toggle><bl-toggle icon="play"></bl-toggle><bl-toggle icon="nextkey"></bl-toggle><bl-toggle icon="last"></bl-toggle>
        </div>
      </div>
      <div class="right">
        <div class="now"><input type="text" value="1" aria-label="当前帧"></div>
        <div class="join">
          <bl-toggle icon="stopwatch"></bl-toggle>
          <label class="num from">起始<input type="text" value="1"></label>
          <label class="num to">结束<input type="text" value="250"></label>
        </div>
      </div>
    </header>
    <div class="scrub"></div>
    <div class="track"></div>
    <div class="bar"></div>
    <div class="head"><b>1</b></div>
    <bl-icon class="grab" name="right"></bl-icon>
  `, (host, root) => {
    for (let frame = 10; frame <= 250; frame += 10) {
      root.querySelector(".scrub").insertAdjacentHTML("beforeend", `<span>${frame}</span>`);
      root.querySelector(".track").insertAdjacentHTML("beforeend", "<i></i>");
    }
  });

  define("bl-outliner", `
    <style>
      :host { display: block; height: 456px; border-radius: 6px 0 0 6px; overflow: hidden; white-space: nowrap; background: #282828 repeating-linear-gradient(#282828 0 29px, #2b2b2b 29px 58px) 0 38px; }
      header { display: flex; gap: 7px; height: 38px; padding: 5px 0 0 11px; background: #2b2b2b; }
      header bl-drop:last-child { margin-left: 15px; }
      div { display: flex; align-items: center; gap: 8px; height: 29px; padding-left: 33px; color: #c8c8c8; }
      div + div { padding-left: 58px; gap: 6px; }
      .active { display: grid; place-items: center; flex: none; width: 28px; height: 27px; border-radius: 6px; background: #555; box-shadow: inset 0 0 0 1px #777; }
    </style>
    <header>
      <bl-drop><bl-icon name="outliner"></bl-icon></bl-drop>
      <bl-drop><bl-icon name="viewlayer"></bl-icon></bl-drop>
      <bl-drop arrow></bl-drop>
    </header>
    <div><bl-icon name="collection"></bl-icon>场景集合</div>
    <div><span class="active"><bl-icon name="collection"></bl-icon></span>Collection</div>
  `);

  define("bl-panel", `
    <style>
      :host { display: block; min-height: 36px; padding-left: 9px; border-radius: 6px 0 0 6px; background: #3d3d3d; }
      header { display: flex; align-items: center; height: 36px; gap: 2px; }
    </style>
    <header><i></i><slot name="head"></slot></header>
    <slot></slot>
  `, (host, root) => {
    root.querySelector("i").replaceWith(makeIcon(host.hasAttribute("open") ? "unfolded" : "folded", 20));
  });

  define("bl-properties", `
    <style>
      :host { display: flex; flex-direction: column; flex: 1; min-height: 0; border-radius: 6px 0 0 6px; overflow: hidden; white-space: nowrap; background: #303030; }
      header { display: flex; gap: 76px; height: 37px; padding: 4px 0 0 11px; }
      main { display: flex; flex: 1; min-height: 0; }
      nav { width: 43px; padding: 12px 0 0 5px; background: #1d1d1d; color: #b5b5b5; }
      nav button { width: 38px; height: 40px; border-radius: 6px 0 0 6px; }
      nav button.on { background: #303030; color: #e5e5e5; }
      nav hr { height: 1px; margin: 0 0 10px; border: 0; background: #181818; }
      nav .red { color: #b5555c; }
      section { flex: 1; min-width: 0; overflow: hidden; padding-left: 11px; }
      .path { display: flex; align-items: center; gap: 13px; height: 55px; padding: 0 0 2px 5px; }
      .list { display: grid; gap: 2px; }
      .props { height: 126px; padding: 17px 0 0 71px; line-height: 37px; }
      .props label { display: block; height: 37px; }
    </style>
    <header><bl-drop><bl-icon name="props"></bl-icon></bl-drop><bl-drop arrow></bl-drop></header>
    <main>
      <nav>
        <button aria-label="工具"><bl-icon name="tools"></bl-icon></button>
        <hr>
        <button aria-label="渲染"><bl-icon name="render"></bl-icon></button>
        <button aria-label="输出"><bl-icon name="output"></bl-icon></button>
        <button aria-label="视图层"><bl-icon name="viewlayer"></bl-icon></button>
        <button class="on" aria-label="场景"><bl-icon name="scene"></bl-icon></button>
        <button class="red" aria-label="世界"><bl-icon name="world"></bl-icon></button>
        <hr>
        <button aria-label="集合"><bl-icon name="collectionline"></bl-icon></button>
        <hr>
        <button class="red" aria-label="纹理"><bl-icon name="texture"></bl-icon></button>
        <hr>
      </nav>
      <section>
        <div class="path"><bl-icon name="scene"></bl-icon>Scene</div>
        <div class="list">
          <bl-panel open><span slot="head">场景</span><div class="props"><label>背景集</label><label>活动剪辑</label></div></bl-panel>
          <bl-panel><span slot="head">单位</span></bl-panel>
          <bl-panel><bl-check slot="head" checked>重力</bl-check></bl-panel>
          <bl-panel><span slot="head">模拟</span></bl-panel>
          <bl-panel><span slot="head">插帧集</span></bl-panel>
          <bl-panel><span slot="head">音频</span></bl-panel>
          <bl-panel><span slot="head">刚体世界</span></bl-panel>
          <bl-panel><span slot="head">光照探头</span></bl-panel>
          <bl-panel><span slot="head">自定义属性</span></bl-panel>
        </div>
      </section>
    </main>
  `);

  define("bl-statusbar", `
    <style>
      :host { display: flex; height: 15px; overflow: hidden; padding: 3px 0 0 14px; color: #989898; white-space: nowrap; }
      span { display: flex; gap: 5px; line-height: 26px; width: 284px; }
    </style>
    <span><bl-icon name="mouseL"></bl-icon>选择</span>
    <span><bl-icon name="mouseM"></bl-icon>视图中心对齐鼠标</span>
    <span><bl-icon name="mouseR"></bl-icon></span>
  `);

  define("bl-callouts", `
    <style>
      :host { display: block; position: absolute; inset: 0; pointer-events: none; overflow: hidden; }
      svg { position: absolute; inset: 0; width: 100%; height: 100%; fill: #fa5252; }
      p {
        position: absolute;
        right: 4px;
        bottom: 8px;
        margin: 0;
        font: 44px/64px "Noto Sans", "Noto Sans CJK SC", sans-serif;
        color: #ffffffb0;
        text-shadow: 1px 2px 2px #0008;
      }
    </style>
    <svg viewBox="0 0 2256 1512" aria-hidden="true">
      <path d="M1540 324L1680 267L1675 259H1717L1686 288L1684 278L1541 326Z"/>
      <path d="M1567 471L1682 357L1675 351L1715 335L1696 373L1691 367L1568 473Z"/>
      <path d="M1637 595L1703 421L1693 419L1722 389V431L1713 426L1639 596Z"/>
      <path d="M2129 319L2171 309L2169 318L2226 330V332L2167 329V339Z"/>
      <path d="M1979 742L2021 739L2017 749L2102 782V784L2013 759L2011 769Z"/>
      <path d="M1938 1113L1943 1154L1933 1151L1902 1259H1900L1923 1148L1913 1147Z"/>
    </svg>
    <p><slot></slot></p>
  `);

  define("bl-app", `
    <style>
      :host { display: flex; flex-direction: column; position: relative; height: 100vh; overflow: hidden; }
      .work { display: grid; grid-template-columns: 1fr 139px; gap: 3px; flex: 1; min-height: 0; padding-left: 1px; }
      .col { display: flex; flex-direction: column; gap: 3px; min-width: 0; min-height: 0; }
    </style>
    <bl-titlebar>* (未保存) - Blender 4.2.17 LTS</bl-titlebar>
    <bl-topbar></bl-topbar>
    <div class="work">
      <div class="col"><bl-viewport></bl-viewport><bl-timeline></bl-timeline></div>
      <div class="col"><bl-outliner></bl-outliner><bl-properties></bl-properties></div>
    </div>
    <bl-statusbar></bl-statusbar>
    <bl-callouts>CSDN @郁闷的网纹蟒</bl-callouts>
  `);
})();
</script>
</body>
</html>
